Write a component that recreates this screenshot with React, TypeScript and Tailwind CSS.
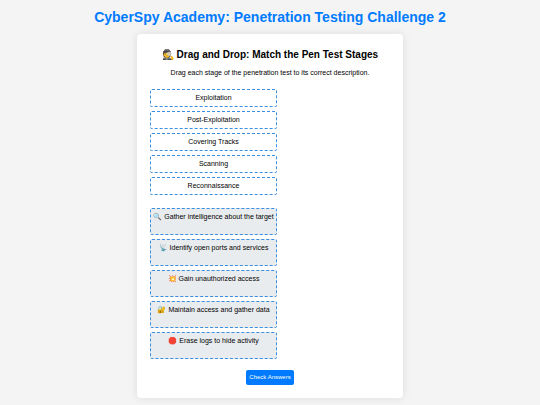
import { useState } from 'react';
import type { DragEvent } from 'react';

interface Target {
  stage: string;
  icon: string;
  text: string;
}

const STAGES = ['Exploitation', 'Post-Exploitation', 'Covering Tracks', 'Scanning', 'Reconnaissance'];

const TARGETS: Target[] = [
  { stage: 'Reconnaissance', icon: '🔍', text: 'Gather intelligence about the target' },
  { stage: 'Scanning', icon: '📡', text: 'Identify open ports and services' },
  { stage: 'Exploitation', icon: '💥', text: 'Gain unauthorized access' },
  { stage: 'Post-Exploitation', icon: '🔐', text: 'Maintain access and gather data' },
  { stage: 'Covering Tracks', icon: '🛑', text: 'Erase logs to hide activity' },
];

export default function App() {
  const [placed, setPlaced] = useState<Record<string, string>>({});
  const [result, setResult] = useState('');

  const handleDrop = (e: DragEvent, target: string) => {
    e.preventDefault();
    const stage = e.dataTransfer.getData('text/plain');
    setPlaced((prev) => ({ ...prev, [target]: stage }));
  };

  const checkAnswers = () => {
    const correct = TARGETS.filter((t) => placed[t.stage] === t.stage).length;
    setResult(`${correct} of ${TARGETS.length} correct`);
  };

  const remaining = STAGES.filter((s) => !Object.values(placed).includes(s));

  return (
    <div className="min-h-screen bg-[#f4f4f4] px-2 pt-2 pb-2 text-center font-['Liberation_Sans',Arial,sans-serif] text-[7px] leading-[8px] text-black">
      <h1 className="mb-2 text-[14px] leading-[18px] font-bold text-[#007bff]">
        CyberSpy Academy: Penetration Testing Challenge 2
      </h1>

      <main className="mx-auto max-w-[266px] rounded bg-white px-[13px] pt-[15px] pb-[13px] shadow-[0_0_8px_rgba(0,0,0,0.1)]">
        <h2 className="mb-2 text-[10px] leading-[12px] font-bold">
          🕵️ Drag and Drop: Match the Pen Test Stages
        </h2>
        <p className="mb-3">Drag each stage of the penetration test to its correct description.</p>

        {/* Draggable stages */}
        <ul className="mb-[13px] flex w-[127px] flex-col gap-1">
          {remaining.map((stage) => (
            <li
              key={stage}
              draggable
              onDragStart={(e) => e.dataTransfer.setData('text/plain', stage)}
              className="h-[18px] cursor-grab rounded-[2px] border border-dashed border-[#3a8fe0] bg-white pt-1"
            >
              {stage}
            </li>
          ))}
        </ul>

        {/* Drop zones */}
        <ul className="flex w-[127px] flex-col gap-1">
          {TARGETS.map((t) => (
            <li
              key={t.stage}
              onDragOver={(e) => e.preventDefault()}
              onDrop={(e) => handleDrop(e, t.stage)}
              className="min-h-[27px] rounded-[2px] border border-dashed border-[#3a8fe0] bg-[#e9ecef] pt-1"
            >
              {t.icon} {t.text}
              {placed[t.stage] && <div className="font-bold">{placed[t.stage]}</div>}
            </li>
          ))}
        </ul>

        <button
          type="button"
          onClick={checkAnswers}
          className="mt-[11px] h-[15px] rounded-[2px] bg-[#007bff] px-[3px] text-[6px] leading-[7px] text-white"
        >
          Check Answers
        </button>
        {result && <p className="mt-1">{result}</p>}
      </main>
    </div>
  );
}
